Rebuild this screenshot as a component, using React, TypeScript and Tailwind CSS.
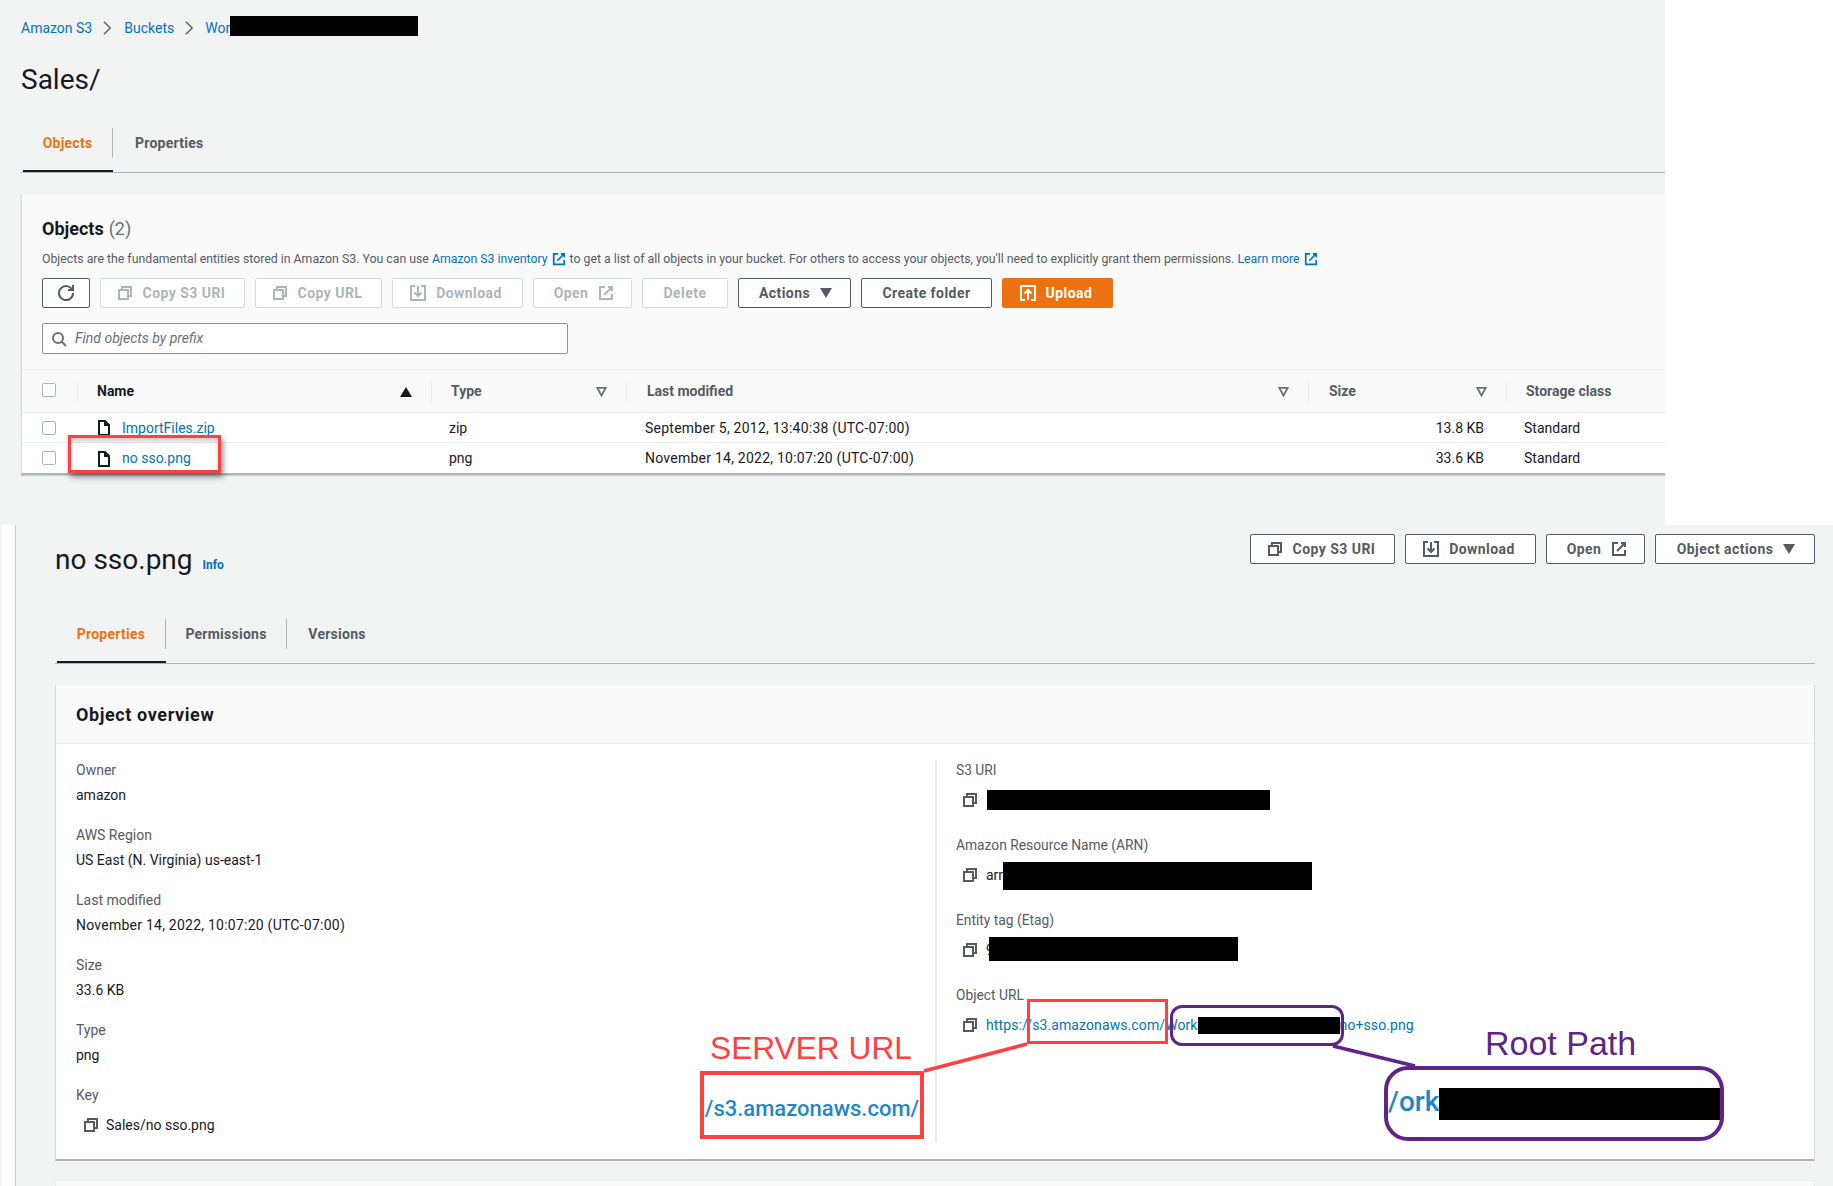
import React from "react";

const Ico = ({ d, size = 16, sw = 2, className = "" }: { d: string; size?: number; sw?: number; className?: string }) => (
  <svg viewBox="0 0 16 16" width={size} height={size} fill="none" stroke="currentColor" strokeWidth={sw} className={`shrink-0 ${className}`}>
    <path d={d} />
  </svg>
);
const COPY = "M2 5h9v9H2z M5 5V2h9v9h-3";
const DOWNLOAD = "M5 1H1v14h14V1h-4 M8 1v10 M4.5 7.5 8 11l3.5-3.5";
const OPEN = "M10 2h4v4 M6 10l8-8 M14 9v5H2V2h5";
const UPLOAD = "M5 15H1V1h14v14h-4 M8 15V5 M4.5 8.5 8 5l3.5 3.5";
const REFRESH = "M10 5h5V0 M15 8a7 7 0 1 1-.7-3";
const FILE = "M3 1h6l4 4v10H3z M9 1v4h4";

const Caret = ({ className = "" }: { className?: string }) => (
  <svg viewBox="0 0 12 10" width={12} height={10} className={`shrink-0 ${className}`} fill="currentColor"><path d="M0 0h12L6 10z" /></svg>
);
const FilterTri = () => (
  <svg viewBox="0 0 12 12" width={11} height={11} className="shrink-0 text-[#687078]" fill="none" stroke="currentColor" strokeWidth={2}><path d="M1.5 2h9L6 10.5z" /></svg>
);
const Chevron = ({ className = "mx-[11px]" }: { className?: string }) => (
  <svg viewBox="0 0 10 16" width={9} height={16} className={`${className} text-[#545b64]`} fill="none" stroke="currentColor" strokeWidth={1.5}><path d="M1 1l7 7-7 7" /></svg>
);

const Btn = ({ w, children, off = false, className = "" }: { w: string; children: React.ReactNode; off?: boolean; className?: string }) => (
  <div className={`${w} h-[30px] shrink-0 flex items-center justify-center gap-[10px] rounded-[2px] border font-bold text-[14px] tracking-[0.45px] ${off ? "border-[#d5dbdb] bg-white text-[#aab7b8]" : "border-[#545b64] bg-white text-[#545b64]"} ${className}`}>
    {children}
  </div>
);

const Tab = ({ label, active = false, w, last = false, left = "" }: { label: string; active?: boolean; w: string; last?: boolean; left?: string }) => (
  <div className={`${w} h-[44px] shrink-0 relative flex flex-col`}>
    <div className={`h-[30px] flex items-center ${left || "justify-center"} text-[14px] font-bold tracking-[0.25px] ${active ? "text-[#ec7211]" : "text-[#545b64]"} ${last ? "" : "border-r border-[#aab7b8]"}`}>{label}</div>
    {active && <div className="absolute left-0 right-0 bottom-0 h-[2px] bg-[#16191f]" />}
  </div>
);

const Check = () => <div className="w-[14px] h-[14px] rounded-[2px] border border-[#aab7b8] bg-white" />;

const Row = ({ name, type, date, size, h }: { name: string; type: string; date: string; size: string; h: string }) => (
  <div className={`grid grid-cols-[55px_354px_195px_682px_198px_1fr] ${h} items-center bg-white text-[14px] text-[#16191f]`}>
    <div className="pl-[20px]"><Check /></div>
    <div className="pl-[19px] pt-[1px] flex items-center gap-[10px]">
      <Ico d={FILE} className="text-[#16191f]" />
      <span className="text-[#0073bb]">{name}</span>
    </div>
    <div className="pl-[18px] pt-[1px]">{type}</div>
    <div className="pl-[19px] pt-[1px] tracking-[0.24px]">{date}</div>
    <div className="pr-[22px] pt-[1px] text-right">{size}</div>
    <div className="pl-[18px] pt-[1px]">Standard</div>
  </div>
);

const Head = ({ label, icon, bold = true, pad = "pl-[19px]" }: { label: string; icon: React.ReactNode; bold?: boolean; pad?: string }) => (
  <div className={`h-[22px] border-l border-[#eaeded] ${pad} pr-[19px] flex items-center justify-between`}>
    <span className={`text-[14px] font-bold ${bold ? "text-[#16191f]" : "text-[#545b64]"}`}>{label}</span>
    {icon}
  </div>
);

const Field = ({ label, value, wide = false }: { label: string; value: React.ReactNode; wide?: boolean }) => (
  <div>
    <div className="h-[18px] flex items-center text-[14px] text-[#545b64]">{label}</div>
    <div className={`h-[18px] mt-[7px] flex items-center text-[14px] text-[#16191f] ${wide ? "tracking-[0.24px]" : ""}`}>{value}</div>
  </div>
);

const CopyRow = ({ children, mask }: { children: React.ReactNode; mask?: React.ReactNode }) => (
  <div className="relative h-[18px] mt-[12px] flex items-center gap-[8px] pl-[6px] text-[14px] text-[#16191f]">
    <Ico d={COPY} className="text-[#545b64]" />
    {children}
    {mask}
  </div>
);

const Redact = ({ className }: { className: string }) => <div className={`absolute bg-black ${className}`} />;

export default function App() {
  return (
    <div className="relative w-[1833px] h-[1186px] overflow-hidden bg-[#f2f3f3]" style={{ fontFamily: "Roboto, 'Noto Sans', sans-serif" }}>
      {/* upper capture */}
      <div className="flex h-[525px]">
        <div className="w-[1665px] shrink-0 pt-[16px] pl-[21px]">
          <div className="h-[20px] flex items-center text-[14px] text-[#0073bb] pt-[4px]">
            <span>Amazon S3</span>
            <Chevron className="ml-[11px] mr-[12px]" />
            <span>Buckets</span>
            <Chevron />
            <span>Wor</span>
          </div>
          <div className="mt-[24px] h-[40px] flex items-center text-[28px] text-[#16191f]">Sales/</div>
          <div className="mt-[28px] h-[45px] border-b border-[#aab7b8] flex pl-[2px]">
            <Tab label="Objects" active w="w-[90px]" />
            <Tab label="Properties" w="w-[117px]" last left="pl-[22px]" />
          </div>
          <div className="mt-[21px] bg-[#fafafa] border-l border-[#d5dbdb] shadow-[0_1px_1px_rgba(0,0,0,0.15)] border-b-2 border-b-[#aab7b8]">
            <div className="h-[175px] pl-[20px] pt-[22px]">
              <div className="h-[24px] flex items-center text-[18px]">
                <span className="font-bold text-[#16191f]">Objects</span>
                <span className="ml-[5px] text-[#687078]">(2)</span>
              </div>
              <div className="mt-[10px] h-[18px] flex items-center text-[12.3px] text-[#545b64] whitespace-nowrap">
                <span>Objects are the fundamental entities stored in Amazon S3. You can use&nbsp;</span>
                <span className="text-[#0073bb]">Amazon S3 inventory</span>
                <Ico d={OPEN} size={14} className="ml-[4px] text-[#0073bb]" />
                <span className="ml-[4px]">to get a list of all objects in your bucket. For others to access your objects, you'll need to explicitly grant them permissions.&nbsp;</span>
                <span className="text-[#0073bb]">Learn more</span>
                <Ico d={OPEN} size={14} className="ml-[4px] text-[#0073bb]" />
              </div>
              <div className="mt-[10px] flex gap-[10px]">
                <Btn w="w-[48px]"><Ico d={REFRESH} /></Btn>
                <Btn w="w-[145px]" off className="pr-[3px]"><Ico d={COPY} />Copy S3 URI</Btn>
                <Btn w="w-[127px]" off className="pr-[3px]"><Ico d={COPY} />Copy URL</Btn>
                <Btn w="w-[131px]" off className="pr-[3px]"><Ico d={DOWNLOAD} />Download</Btn>
                <Btn w="w-[99px]" off className="pl-[3px]">Open<Ico d={OPEN} /></Btn>
                <Btn w="w-[86px]" off>Delete</Btn>
                <Btn w="w-[113px]" className="pl-[2px]">Actions<Caret /></Btn>
                <Btn w="w-[131px]">Create folder</Btn>
                <div className="w-[111px] h-[30px] pr-[3px] flex items-center justify-center gap-[10px] rounded-[2px] bg-[#ec7211] text-white text-[14px] font-bold tracking-[0.45px]"><Ico d={UPLOAD} />Upload</div>
              </div>
              <div className="mt-[15px] w-[526px] h-[31px] flex items-center gap-[8px] pl-[8px] rounded-[2px] border border-[#879596] bg-white">
                <svg viewBox="0 0 16 16" width={16} height={16} fill="none" stroke="currentColor" strokeWidth={2} className="text-[#687078]"><circle cx="7" cy="7" r="5" /><path d="M15 15l-4.5-4.5" /></svg>
                <span className="text-[14px] italic text-[#687078]">Find objects by prefix</span>
              </div>
            </div>
            <div className="border-t border-[#eaeded] grid grid-cols-[55px_354px_195px_682px_198px_1fr] h-[44px] items-center border-b border-b-[#eaeded] pt-[1px]">
              <div className="pl-[20px] -mt-[3px]"><Check /></div>
              <Head label="Name" icon={<Caret className="rotate-180 text-[#16191f]" />} />
              <Head label="Type" bold={false} icon={<FilterTri />} />
              <Head label="Last modified" bold={false} icon={<FilterTri />} pad="pl-[20px]" />
              <Head label="Size" bold={false} icon={<FilterTri />} pad="pl-[20px]" />
              <Head label="Storage class" bold={false} icon={null} />
            </div>
            <div className="border-b border-[#eaeded]">
              <Row h="h-[29px]" name="ImportFiles.zip" type="zip" date="September 5, 2012, 13:40:38 (UTC-07:00)" size="13.8 KB" />
            </div>
            <Row h="h-[30px]" name="no sso.png" type="png" date="November 14, 2022, 10:07:20 (UTC-07:00)" size="33.6 KB" />
          </div>
        </div>
        <div className="flex-1 bg-white" />
      </div>

      {/* lower capture */}
      <div className="flex h-[661px]">
        <div className="w-[16px] shrink-0 pl-[2px] bg-[#f2f3f3]">
          <div className="h-full bg-white border-r border-[#c4c9cc]" />
        </div>
        <div className="flex-1 pl-[39px] pr-[18px] pt-[9px]">
          <div className="h-[85px] flex justify-between items-start">
            <div className="flex items-baseline mt-[6px]">
              <span className="text-[28px] leading-[40px] text-[#16191f]">no sso.png</span>
              <span className="ml-[10px] text-[12px] font-bold text-[#0073bb]">Info</span>
            </div>
            <div className="flex gap-[10px]">
              <Btn w="w-[145px]" className="pr-[3px]"><Ico d={COPY} />Copy S3 URI</Btn>
              <Btn w="w-[131px]" className="pr-[3px]"><Ico d={DOWNLOAD} />Download</Btn>
              <Btn w="w-[99px]" className="pl-[3px]">Open<Ico d={OPEN} /></Btn>
              <Btn w="w-[160px]" className="pl-[2px]">Object actions<Caret /></Btn>
            </div>
          </div>
          <div className="h-[45px] border-b border-[#aab7b8] flex pl-[2px]">
            <Tab label="Properties" active w="w-[109px]" />
            <Tab label="Permissions" w="w-[121px]" />
            <Tab label="Versions" w="w-[100px]" last />
          </div>
          <div className="mt-[21px] h-[476px] bg-white border-l border-r border-[#d5dbdb] border-b-2 border-b-[#aab7b8] flex flex-col">
            <div className="h-[59px] shrink-0 bg-[#fafafa] border-b border-[#eaeded] pl-[20px] flex items-center text-[18px] font-bold tracking-[0.6px] text-[#16191f]">Object overview</div>
            <div className="flex pt-[16px]">
              <div className="w-[879px] shrink-0 pl-[20px] pt-[1px] flex flex-col gap-[22px]">
                <Field label="Owner" value="amazon" />
                <Field label="AWS Region" value="US East (N. Virginia) us-east-1" />
                <Field wide label="Last modified" value="November 14, 2022, 10:07:20 (UTC-07:00)" />
                <Field label="Size" value="33.6 KB" />
                <Field label="Type" value="png" />
                <div>
                  <div className="h-[18px] flex items-center text-[14px] text-[#545b64]">Key</div>
                  <div className="h-[18px] mt-[12px] flex items-center gap-[7px] pl-[7px] text-[14px] text-[#16191f]">
                    <Ico d={COPY} className="text-[#545b64]" />Sales/no sso.png
                  </div>
                </div>
              </div>
              <div className="h-[382px] border-l-2 border-[#eaeded] pl-[19px] pt-[1px] flex flex-col gap-[27px]">
                <div>
                  <div className="h-[18px] flex items-center text-[13.8px] text-[#545b64]">S3 URI</div>
                  <CopyRow mask={<Redact className="left-[31px] -top-[1px] w-[283px] h-[20px]" />}>s3://</CopyRow>
                </div>
                <div>
                  <div className="h-[18px] flex items-center text-[13.8px] text-[#545b64]">Amazon Resource Name (ARN)</div>
                  <CopyRow mask={<Redact className="left-[47px] -top-[4px] w-[309px] h-[28px]" />}>arn:aws:s3</CopyRow>
                </div>
                <div>
                  <div className="h-[18px] flex items-center text-[13.8px] text-[#545b64]">Entity tag (Etag)</div>
                  <CopyRow mask={<Redact className="left-[33px] -top-[4px] w-[249px] h-[24px]" />}>9</CopyRow>
                </div>
                <div>
                  <div className="h-[18px] flex items-center text-[13.8px] text-[#545b64]">Object URL</div>
                  <CopyRow>
                    <span className="flex items-center text-[#0073bb] tracking-[0.1px]">
                      <span>https://s3.amazonaws.com/Work</span>
                      <span className="w-[142px] h-[17px] bg-black" />
                      <span>no+sso.png</span>
                    </span>
                  </CopyRow>
                </div>
              </div>
            </div>
          </div>
          <div className="mt-[19px] h-[40px] bg-[#fafafa] border border-[#eaeded]" />
        </div>
      </div>

      {/* annotations and redactions drawn over the captures */}
      <div className="absolute left-[230px] top-[16px] w-[188px] h-[20px] bg-black" />
      <div className="absolute left-[68px] top-[435px] w-[153px] h-[38px] border-[3px] border-[#ff4040] shadow-[2px_4px_6px_rgba(0,0,0,0.45),inset_0_3px_4px_rgba(0,0,0,0.2)]" />
      <svg className="absolute left-0 top-0" width={1833} height={1186} fill="none">
        <path d="M924 1071L1027 1044" stroke="#ff4040" strokeWidth={3.5} />
        <path d="M1333 1046L1415 1066" stroke="#5f2586" strokeWidth={3.5} />
      </svg>
      <div className="absolute left-[1027px] top-[999px] w-[141px] h-[45px] border-[3px] border-[#ff4040]" />
      <div className="absolute left-[1170px] top-[1005px] w-[174px] h-[41px] border-[3px] border-[#5f2586] rounded-[12px]" />
      <div className="absolute left-[710px] top-[1028px] text-[31.7px] leading-[40px] text-[#ff4040] whitespace-nowrap" style={{ fontFamily: "'Liberation Sans', sans-serif" }}>SERVER URL</div>
      <div className="absolute left-[700px] top-[1071px] w-[224px] h-[68px] pt-[7px] border-[4px] border-[#ff4040] bg-white flex items-center justify-center text-[22px] font-medium text-[#1f87c7] whitespace-nowrap">/s3.amazonaws.com/</div>
      <div className="absolute left-[1485px] top-[1023px] text-[34px] leading-[40px] text-[#5f2586] whitespace-nowrap" style={{ fontFamily: "'Liberation Sans', sans-serif" }}>Root Path</div>
      <div className="absolute left-[1384px] top-[1066px] w-[340px] h-[75px] border-[4px] border-[#5f2586] rounded-[24px] bg-white flex items-center">
        <span className="w-[51px] shrink-0 -mt-[3px] text-[28px] font-medium text-[#1f87c7] whitespace-nowrap">/ork</span>
        <div className="w-[282px] h-[32px] bg-black" />
      </div>
    </div>
  );
}
